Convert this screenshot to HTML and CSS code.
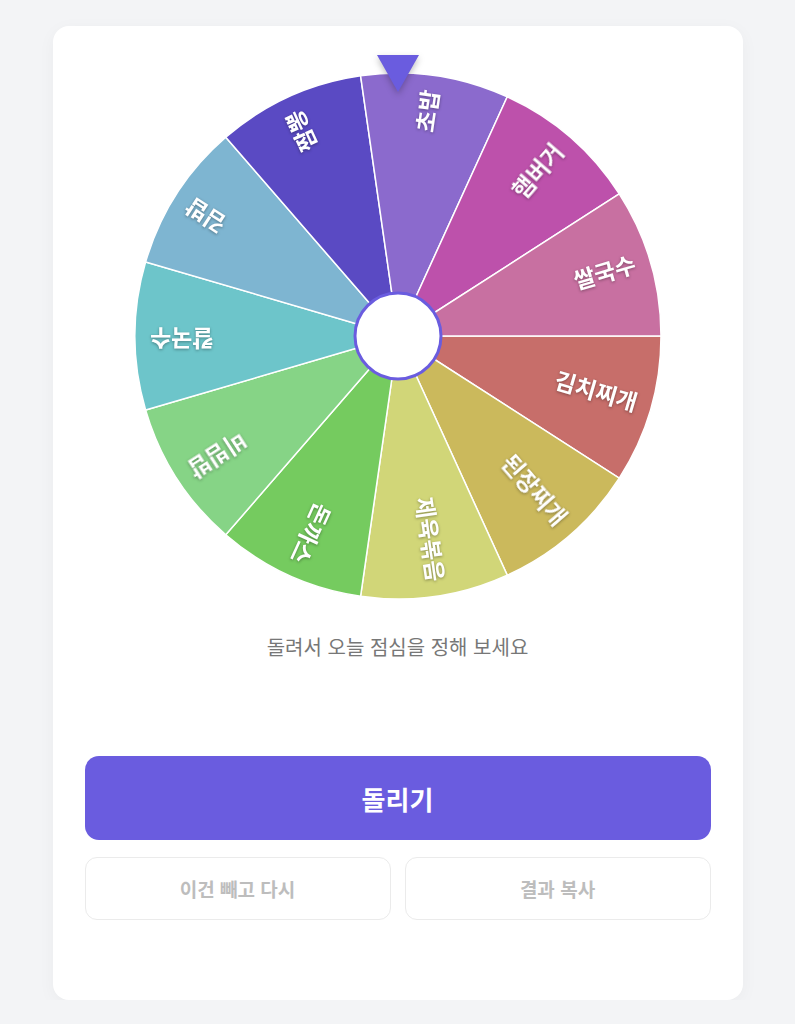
FILE: index.html
```html
<!DOCTYPE html>
<html lang="ko">
<head>
    <meta charset="UTF-8">
    <meta name="viewport" content="width=device-width, initial-scale=1.0">
    <title>점심 룰렛</title>
    <link rel="stylesheet" href="styles.css">
</head>
<body>
    <div class="card">
        <div class="wheel-wrap">
            <svg class="pointer" width="42" height="38" viewBox="0 0 42 38">
                <polygon points="0,0 42,0 21,37" fill="#6a5cdf"/>
            </svg>
            <svg class="wheel" width="526" height="526" viewBox="0 0 526 526">
                <g class="slices">
                    <path d="M263 263 L526 263 A263 263 0 0 1 484.25 405.19 Z" fill="#c76e6a"/>
                    <path d="M263 263 L484.25 405.19 A263 263 0 0 1 372.26 502.23 Z" fill="#cbb95c"/>
                    <path d="M263 263 L372.26 502.23 A263 263 0 0 1 225.57 523.32 Z" fill="#d1d678"/>
                    <path d="M263 263 L225.57 523.32 A263 263 0 0 1 90.77 461.76 Z" fill="#75cb5f"/>
                    <path d="M263 263 L90.77 461.76 A263 263 0 0 1 10.65 337.09 Z" fill="#86d486"/>
                    <path d="M263 263 L10.65 337.09 A263 263 0 0 1 10.65 188.91 Z" fill="#6dc5ca"/>
                    <path d="M263 263 L10.65 188.91 A263 263 0 0 1 90.77 64.24 Z" fill="#7eb5d1"/>
                    <path d="M263 263 L90.77 64.24 A263 263 0 0 1 225.57 2.68 Z" fill="#5a4ac3"/>
                    <path d="M263 263 L225.57 2.68 A263 263 0 0 1 372.26 23.77 Z" fill="#8b6acd"/>
                    <path d="M263 263 L372.26 23.77 A263 263 0 0 1 484.25 120.81 Z" fill="#bd51ab"/>
                    <path d="M263 263 L484.25 120.81 A263 263 0 0 1 526 263 Z" fill="#c870a1"/>
                </g>
                <g class="labels">
                    <text transform="rotate(16.36 263 263)" x="511" y="259">김치찌개</text>
                    <text transform="rotate(49.09 263 263)" x="511" y="259">된장찌개</text>
                    <text transform="rotate(81.82 263 263)" x="511" y="259">제육볶음</text>
                    <text transform="rotate(114.55 263 263)" x="511" y="259">돈까스</text>
                    <text transform="rotate(147.27 263 263)" x="511" y="259">비빔밥</text>
                    <text transform="rotate(180 263 263)" x="511" y="259">칼국수</text>
                    <text transform="rotate(212.73 263 263)" x="511" y="259">김밥</text>
                    <text transform="rotate(245.45 263 263)" x="511" y="259">짬뽕</text>
                    <text transform="rotate(278.18 263 263)" x="511" y="259">초밥</text>
                    <text transform="rotate(310.91 263 263)" x="511" y="259">햄버거</text>
                    <text transform="rotate(343.64 263 263)" x="511" y="259">쌀국수</text>
                </g>
                <circle class="hub" cx="263" cy="263" r="43"/>
            </svg>
        </div>

        <p class="hint">돌려서 오늘 점심을 정해 보세요</p>

        <div class="actions">
            <button class="spin-btn">돌리기</button>
            <div class="sub-actions">
                <button class="sub-btn">이건 빼고 다시</button>
                <button class="sub-btn">결과 복사</button>
            </div>
        </div>
    </div>
</body>
</html>
```

FILE: styles.css
```css
body {
    font-family: 'Noto Sans CJK KR', 'Noto Sans', sans-serif;
    background: #f3f4f6;
    color: #333;
    margin: 0;
    padding: 26px 0 0;
}

.card {
    width: 690px;
    margin: 0 auto;
    box-sizing: border-box;
    padding: 47px 32px 80px;
    background: #fff;
    border-radius: 16px;
    box-shadow: 0 4px 18px rgba(0, 0, 0, 0.04);
}

.wheel-wrap {
    position: relative;
    width: 526px;
    height: 526px;
    margin: 0 auto;
}

.wheel {
    display: block;
}

.slices path {
    stroke: #fff;
    stroke-width: 1.5;
}

.labels text {
    fill: #fff;
    font-size: 23px;
    font-weight: 700;
    text-anchor: end;
    dominant-baseline: central;
}

.labels {
    filter: drop-shadow(0 1px 1.5px rgba(0, 0, 0, 0.35));
}

.hub {
    fill: #fff;
    stroke: #6a5cdf;
    stroke-width: 3;
}

.pointer {
    position: absolute;
    top: -18px;
    left: 50%;
    transform: translateX(-50%);
    z-index: 2;
    filter: drop-shadow(0 3px 3px rgba(0, 0, 0, 0.25));
}

.hint {
    margin: 35px 0 0;
    text-align: center;
    font-size: 20px;
    line-height: 26px;
    color: #777;
}

.actions {
    margin-top: 96px;
}

.spin-btn {
    display: block;
    width: 100%;
    height: 84px;
    border: none;
    border-radius: 14px;
    background: #6a5cdf;
    color: #fff;
    font-family: inherit;
    font-size: 26px;
    font-weight: 700;
    cursor: pointer;
}

.sub-actions {
    display: flex;
    gap: 14px;
    margin-top: 17px;
}

.sub-btn {
    flex: 1;
    height: 63px;
    background: #fff;
    border: 1.5px solid #ebebeb;
    border-radius: 12px;
    color: #bdbdbd;
    font-family: inherit;
    font-size: 19px;
    font-weight: 700;
    cursor: pointer;
}
```
